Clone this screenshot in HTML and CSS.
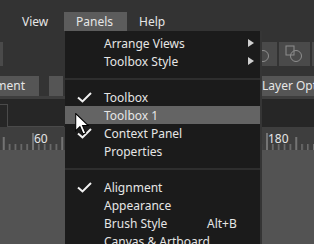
FILE: index.html
```html
<!DOCTYPE html>
<html lang="en" dir="ltr">
  <head>
    <meta charset="utf-8">
    <title>panels menu</title>
    <link rel="stylesheet" href="styles.css">
  </head>
  <body>

    <div class="app">
      <nav class="menubar">
        <span class="menu-item view">View</span>
        <span class="menu-item panels open">Panels</span>
        <span class="menu-item help">Help</span>
      </nav>

      <div class="toolbar">
        <div class="group">
          <span class="tool-btn stub"></span>
        </div>
        <div class="group">
          <span class="tool-btn"><svg viewBox="0 0 31 24"><rect x="7" y="4" width="8" height="9"/><circle cx="17" cy="14" r="5.5"/></svg></span>
          <span class="tool-btn"><svg viewBox="0 0 31 24"><rect x="7" y="4" width="8" height="9"/><circle cx="17" cy="14" r="5.5"/></svg></span>
          <span class="tool-btn"><svg viewBox="0 0 31 24"><rect x="7" y="4" width="8" height="9"/><circle cx="17" cy="14" r="5.5"/></svg></span>
          <span class="tool-btn"><svg viewBox="0 0 31 24"><rect x="7" y="4" width="8" height="9"/><circle cx="17" cy="14" r="5.5"/></svg></span>
        </div>
      </div>

      <div class="tabbar">
        <div class="group">
          <span class="tab-btn cut"><span>Alignment</span></span>
          <span class="tab-btn small"></span>
        </div>
        <div class="group">
          <span class="tab-btn wide">Layer Options</span>
        </div>
      </div>

      <div class="strip"></div>

      <div class="panel">
        <div class="panel-tab"></div>
        <div class="panel-body"></div>
      </div>

      <div class="ruler">
        <svg width="380" height="23" viewBox="0 0 380 23">
          <defs>
            <pattern id="ticks" x="32.5" y="0" width="58.5" height="23" patternUnits="userSpaceOnUse">
              <line x1="0.5" y1="6" x2="0.5" y2="23" class="tick-long"/>
              <line x1="6.35" y1="17" x2="6.35" y2="23" class="tick"/>
              <line x1="12.2" y1="17" x2="12.2" y2="23" class="tick"/>
              <line x1="18.05" y1="17" x2="18.05" y2="23" class="tick"/>
              <line x1="23.9" y1="17" x2="23.9" y2="23" class="tick"/>
              <line x1="29.75" y1="10" x2="29.75" y2="23" class="tick-long"/>
              <line x1="35.6" y1="17" x2="35.6" y2="23" class="tick"/>
              <line x1="41.45" y1="17" x2="41.45" y2="23" class="tick"/>
              <line x1="47.3" y1="17" x2="47.3" y2="23" class="tick"/>
              <line x1="53.15" y1="17" x2="53.15" y2="23" class="tick"/>
            </pattern>
          </defs>
          <rect width="380" height="23" fill="url(#ticks)"/>
          <text x="34" y="16" class="ruler-label">60</text>
          <text x="268" y="16" class="ruler-label">180</text>
        </svg>
      </div>

      <div class="canvas"></div>
    </div>

    <div class="dropdown">
      <div class="item">
        <span class="check"></span>
        <span class="label">Arrange Views</span>
        <span class="arrow"><svg viewBox="0 0 6 8"><path d="M0 0 L6 4 L0 8 Z"/></svg></span>
      </div>
      <div class="item">
        <span class="check"></span>
        <span class="label">Toolbox Style</span>
        <span class="arrow"><svg viewBox="0 0 6 8"><path d="M0 0 L6 4 L0 8 Z"/></svg></span>
      </div>
      <hr>
      <div class="item">
        <span class="check"><svg viewBox="0 0 15 11"><path d="M1 5.5 L5.5 9.5 L14 1"/></svg></span>
        <span class="label">Toolbox</span>
      </div>
      <div class="item active">
        <span class="check"></span>
        <span class="label">Toolbox 1</span>
      </div>
      <div class="item">
        <span class="check"><svg viewBox="0 0 15 11"><path d="M1 5.5 L5.5 9.5 L14 1"/></svg></span>
        <span class="label">Context Panel</span>
      </div>
      <div class="item">
        <span class="check"></span>
        <span class="label">Properties</span>
      </div>
      <hr>
      <div class="item">
        <span class="check"><svg viewBox="0 0 15 11"><path d="M1 5.5 L5.5 9.5 L14 1"/></svg></span>
        <span class="label">Alignment</span>
      </div>
      <div class="item">
        <span class="check"></span>
        <span class="label">Appearance</span>
      </div>
      <div class="item">
        <span class="check"></span>
        <span class="label">Brush Style</span>
        <span class="shortcut">Alt+B</span>
      </div>
      <div class="item">
        <span class="check"></span>
        <span class="label">Canvas &amp; Artboard</span>
      </div>
    </div>

    <svg class="cursor" viewBox="0 0 13 21"><path d="M0.5 0.5 L0.5 17 L4.5 13 L7.5 20 L10 19 L7 12 L12.5 12 Z"/></svg>

  </body>
</html>
```

FILE: styles.css
```css
* { box-sizing: border-box; }

body {
  margin: 0;
  width: 314px;
  height: 244px;
  overflow: hidden;
  background-color: #333;
  font-family: 'Noto Sans', 'Liberation Sans', sans-serif;
  font-size: 12px;
  color: #e6e6e6;
}

.app {
  width: 380px;
}

/* menu bar */

.menubar {
  display: flex;
  height: 32px;
  padding: 12px 0 0 10px;
}

.menu-item {
  height: 19px;
  line-height: 19px;
  padding-left: 12px;
}

.view { width: 54px; }
.panels { width: 63px; }

.menu-item.open {
  background-color: #5c5c5c;
}

/* toolbars */

.toolbar, .tabbar {
  display: flex;
  justify-content: space-between;
  padding-right: 4px;
}

.toolbar {
  height: 38px;
  padding-top: 10px;
}

.group {
  display: flex;
  gap: 2px;
}

.tool-btn {
  width: 31px;
  height: 24px;
  background-color: #4a4a4a;
}

.tool-btn.stub { width: 3px; }

.tool-btn svg {
  display: block;
  width: 31px;
  height: 24px;
  fill: none;
  stroke: #8e8e8e;
  stroke-width: 1;
}

.tabbar {
  height: 26px;
  padding-top: 6px;
}

.tabbar .group { gap: 10px; }

.tab-btn {
  height: 20px;
  line-height: 20px;
  background-color: #555;
  white-space: nowrap;
  overflow: hidden;
}

.tab-btn.cut {
  width: 39px;
  display: flex;
  justify-content: flex-end;
  padding-right: 14px;
}

.tab-btn.small { width: 14px; }

.tab-btn.wide {
  width: 126px;
  padding-left: 12px;
}

.strip {
  height: 3px;
  background-color: #3d3d3d;
}

/* panel */

.panel {
  display: flex;
  height: 28px;
  background-color: #262626;
}

.panel-tab {
  width: 8px;
  margin-top: 5px;
  border-top: 1px solid #4a4a4a;
  border-right: 1px solid #4a4a4a;
}

.panel-body {
  width: 56px;
  border-bottom: 1px solid #4a4a4a;
}

/* ruler */

.ruler {
  height: 23px;
  background-color: #3e3e3e;
}

.ruler svg { display: block; }

.tick {
  stroke: #8a8a8a;
  stroke-width: 1;
}

.tick-long {
  stroke: #a8a8a8;
  stroke-width: 1;
}

.ruler-label {
  font-family: 'Noto Sans', sans-serif;
  font-size: 12px;
  fill: #e6e6e6;
}

.canvas {
  height: 100px;
  background-color: #535353;
}

/* dropdown */

.dropdown {
  position: absolute;
  left: 65px;
  top: 31px;
  width: 197px;
  height: 220px;
  padding-top: 3px;
  background-color: #1b1b1b;
  border-right: 2px solid #353535;
}

.item {
  display: flex;
  align-items: center;
  height: 18px;
}

.item.active {
  background-color: #646464;
}

.check {
  width: 39px;
  padding-left: 12px;
  flex-shrink: 0;
}

.check svg {
  display: block;
  width: 15px;
  height: 11px;
  fill: none;
  stroke: #f2f2f2;
  stroke-width: 2;
}

.label {
  width: 103px;
  white-space: nowrap;
}

.arrow {
  margin-left: auto;
  margin-right: 6px;
}

.arrow svg {
  display: block;
  width: 6px;
  height: 8px;
  fill: #d0d0d0;
}

.shortcut {
  white-space: nowrap;
}

hr {
  margin: 8px 0;
  border: none;
  height: 2px;
  background-color: #2e2e2e;
}

.cursor {
  position: absolute;
  left: 75px;
  top: 113px;
  width: 14px;
  height: 22px;
  fill: #fff;
  stroke: #000;
  stroke-width: 1;
}
```
